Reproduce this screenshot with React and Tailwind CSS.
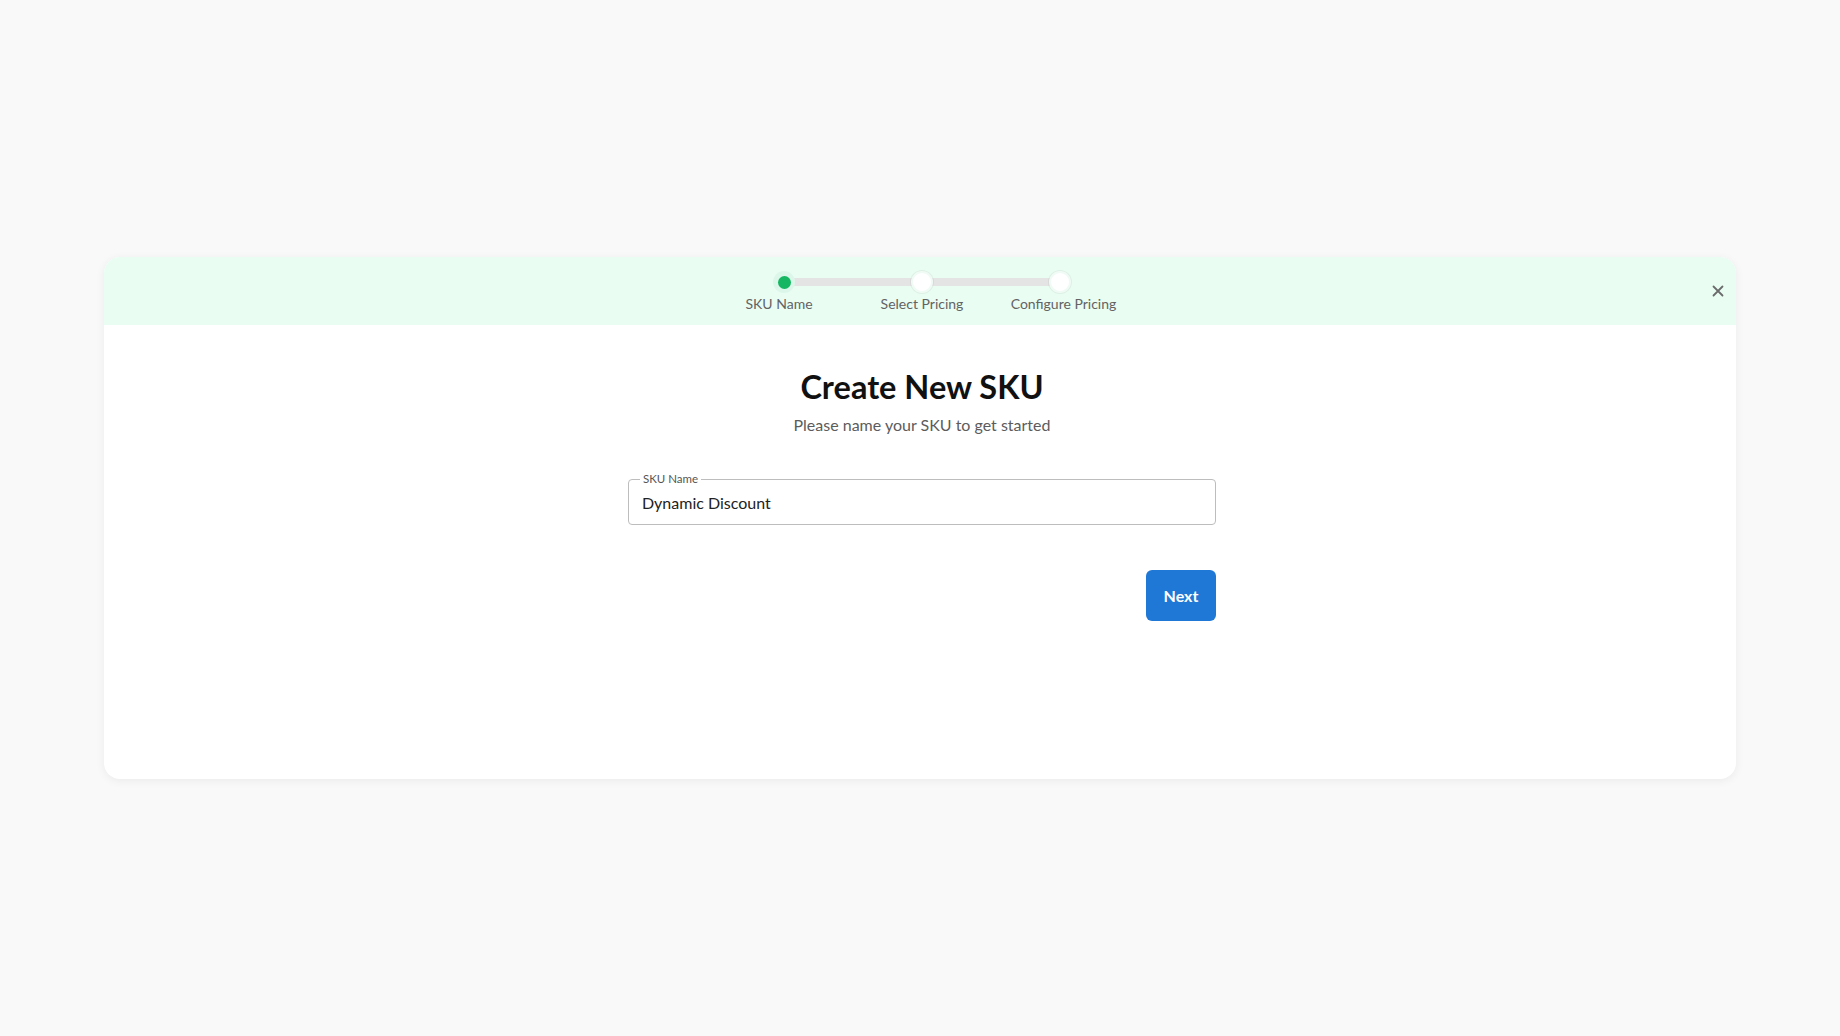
import React, { useState } from 'react';

const steps = ['SKU Name', 'Select Pricing', 'Configure Pricing'];
// labels in the design are not exactly centred under their dots
const labelNudge = ['mr-[10px]', '', 'ml-[7px]'];

const Stepper = ({ active }) => (
  <div className="relative flex pl-[4px]">
    {/* track behind the dots */}
    <div className="absolute left-[73px] right-[69px] top-[7px] h-[8px] bg-[#e4e4e4]" />
    {steps.map((label, i) => (
      <div key={label} className="relative flex w-[138px] flex-col items-center">
        {i === active ? (
          <div className="flex h-[22px] w-[22px] items-center justify-center rounded-full bg-[#dcf7ea]">
            <div className="h-[13px] w-[13px] rounded-full bg-[#16b663]" />
          </div>
        ) : (
          <div className="h-[22px] w-[22px] rounded-full border-2 border-[#f1fbf6] bg-white shadow-[0_0_0_1px_rgba(0,0,0,0.05)]" />
        )}
        <span className={`mt-[2px] text-[14px] leading-[18px] text-[#636363] ${labelNudge[i]}`}>{label}</span>
      </div>
    ))}
  </div>
);

export default function App() {
  const [name, setName] = useState('Dynamic Discount');

  return (
    <div className="flex min-h-screen items-center bg-[#f9f9f9] px-[104px] font-['Lato','Noto_Sans',sans-serif]">
      <div className="flex h-[522px] w-full flex-col overflow-hidden rounded-2xl bg-white shadow-[0_2px_10px_rgba(0,0,0,0.06)]">
        <div className="relative flex h-[68px] items-start justify-center bg-[#e9fdf3] pt-[14px]">
          <Stepper active={0} />
          <button className="absolute right-[8px] top-[34px] -translate-y-1/2 p-1 text-[#6b6b6b]" title="Close">
            <svg xmlns="http://www.w3.org/2000/svg" className="h-[12px] w-[12px]" viewBox="0 0 12 12" fill="none" stroke="currentColor">
              <path strokeWidth="1.8" strokeLinecap="round" d="M1.5 1.5l9 9M10.5 1.5l-9 9" />
            </svg>
          </button>
        </div>

        <div className="flex justify-center pl-[4px]">
          <div className="mt-[43px] flex w-[588px] flex-col items-center">
            <h1 className="text-[32.5px] font-bold leading-[38px] text-[#111]">Create New SKU</h1>
            <p className="mt-[7px] text-[16px] leading-6 text-[#5c5c5c]">Please name your SKU to get started</p>

            <div className="relative mt-[42px] w-full">
              <label className="absolute left-[12px] top-0 -translate-y-1/2 bg-white px-[3px] text-[11.5px] leading-[12px] text-[#555]">
                SKU Name
              </label>
              <input
                type="text"
                value={name}
                onChange={(e) => setName(e.target.value)}
                className="h-[46px] w-full rounded-[4px] border border-[#bdbdbd] px-[13px] text-[16px] text-[#222] outline-none"
              />
            </div>

            <div className="mt-[45px] flex w-full justify-end">
              <button className="h-[51px] w-[70px] rounded-[6px] bg-[#1f78d6] text-[16px] font-bold text-white">
                Next
              </button>
            </div>
          </div>
        </div>
      </div>
    </div>
  );
}
